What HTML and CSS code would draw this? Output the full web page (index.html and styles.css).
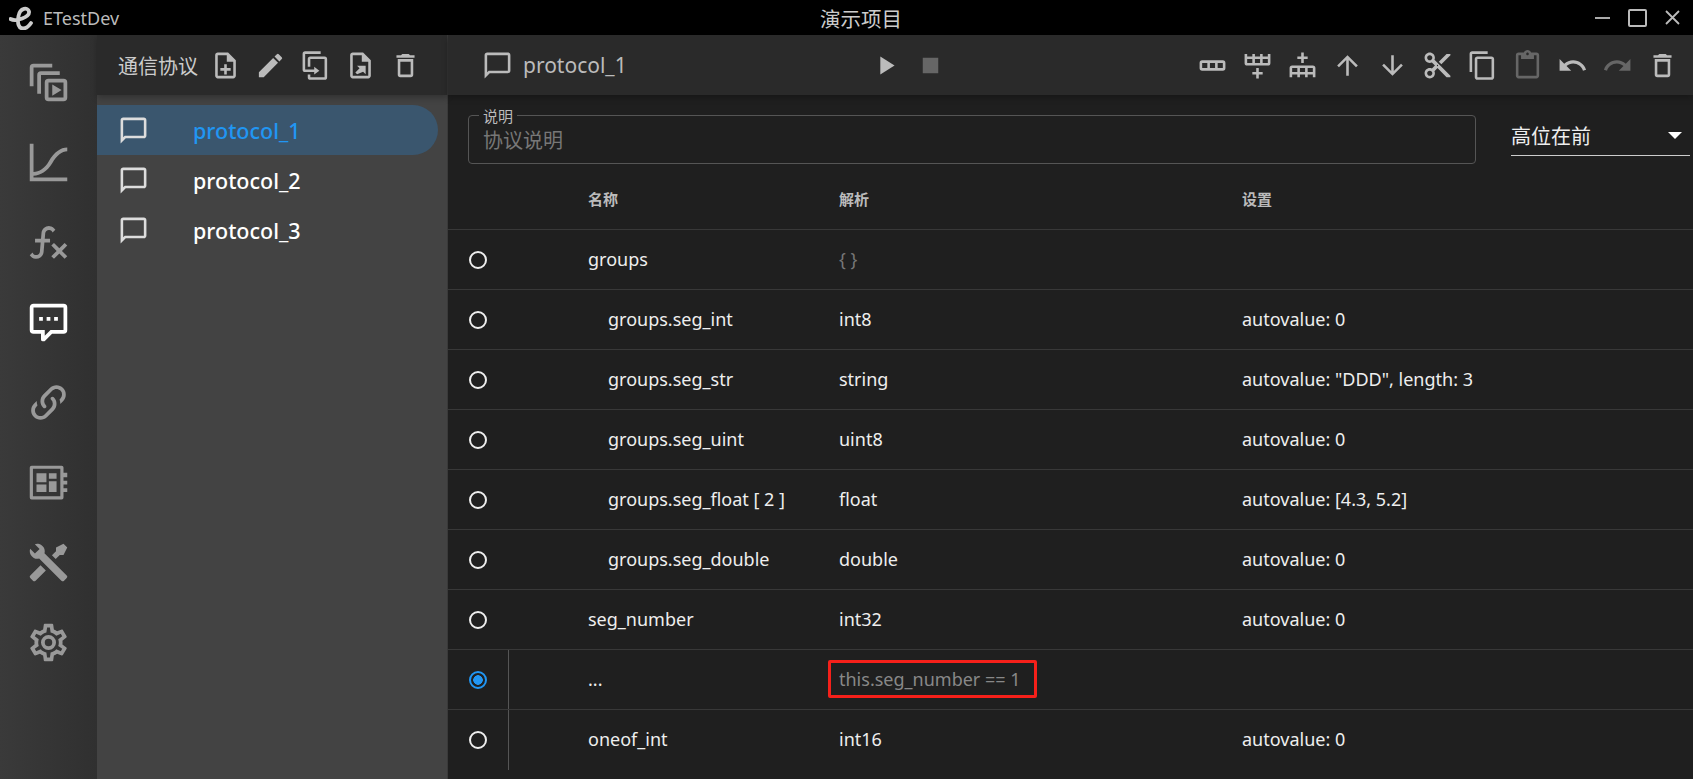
FILE: index.html
```html
<!DOCTYPE html>
<html lang="en">
<head>
    <meta charset="UTF-8">
    <meta name="viewport" content="width=device-width, initial-scale=1.0">
    <title>ETestDev</title>
    <link rel="stylesheet" href="styles.css">
</head>
<body>
    <!-- Title bar -->
    <header class="titlebar">
        <div class="app-name">
            <svg class="app-logo" viewBox="0 0 24 24"><path d="M1.500 13C7 16 21 11 20 5.500 19 1 11 1.500 9.500 10 8 18 10 22.500 14 22.500 17 22.500 20 20 22 17" fill="none" stroke="#ccc" stroke-width="3.800" stroke-linecap="round"/></svg>
            <span>ETestDev</span>
        </div>
        <div class="project-name">演示项目</div>
        <div class="window-buttons">
            <svg width="15" height="18" viewBox="0 0 15 18"><path d="M0 9h15" stroke="#aaa" stroke-width="2"/></svg>
            <svg width="19" height="18" viewBox="0 0 19 18"><rect x="1" y="1" width="17" height="16" rx="1" fill="none" stroke="#bbb" stroke-width="2"/></svg>
            <svg width="15" height="15" viewBox="0 0 15 15"><path d="M1 1l13 13M14 1L1 14" stroke="#bbb" stroke-width="1.800"/></svg>
        </div>
    </header>

    <div class="app">
        <!-- Left navigation -->
        <nav class="sidebar">
            <div class="nav-item"><svg viewBox="0 0 24 24"><path d="M4,2A2,2 0 0,0 2,4V14H4V4H14V2H4M8,6A2,2 0 0,0 6,8V18H8V8H18V6H8M12,10A2,2 0 0,0 10,12V20A2,2 0 0,0 12,22H20A2,2 0 0,0 22,20V12A2,2 0 0,0 20,10H12M12,12H20V20H12V12M14,13V19L19,16L14,13Z"/></svg></div>
            <div class="nav-item"><svg viewBox="0 0 24 24"><path d="M4,19V20H22V22H2V2H4V17C7,17 10,15 12.100,11.400C15.100,6.400 18.400,4 22,4V6C19.200,6 16.500,8.100 13.900,12.500C11.300,16.600 7.700,19 4,19Z"/></svg></div>
            <div class="nav-item"><svg viewBox="0 0 24 24"><path d="M12.420,5.290C11.320,5.190 10.350,6 10.250,7.110L10,10H12.820V12H9.820L9.380,17.070C9.180,19.270 7.240,20.900 5.040,20.700C3.790,20.590 2.660,19.900 2,18.830L3.500,17.330C3.830,18.380 4.960,18.970 6,18.630C6.780,18.390 7.330,17.700 7.400,16.890L7.820,12H4.820V10H8L8.270,6.930C8.460,4.730 10.390,3.100 12.600,3.280C13.860,3.390 15,4.090 15.660,5.170L14.160,6.670C13.910,5.900 13.230,5.360 12.420,5.290M22,13.650L20.590,12.240L17.760,15.070L14.930,12.240L13.500,13.650L16.350,16.500L13.500,19.310L14.930,20.720L17.760,17.890L20.590,20.720L22,19.310L19.170,16.500L22,13.650Z"/></svg></div>
            <div class="nav-item active"><svg viewBox="0 0 24 24"><path d="M9,22A1,1 0 0,1 8,21V18H4A2,2 0 0,1 2,16V4C2,2.890 2.900,2 4,2H20A2,2 0 0,1 22,4V16A2,2 0 0,1 20,18H13.900L10.200,21.710C10,21.900 9.750,22 9.500,22V22H9M10,16V19.080L13.080,16H20V4H4V16H10M17,11H15V9H17V11M13,11H11V9H13V11M9,11H7V9H9V11Z"/></svg></div>
            <div class="nav-item"><svg viewBox="0 0 24 24"><path d="M10.590,13.410C11,13.800 11,14.440 10.590,14.830C10.200,15.220 9.560,15.220 9.170,14.830C7.220,12.880 7.220,9.710 9.170,7.760V7.760L12.710,4.220C14.660,2.270 17.830,2.270 19.780,4.220C21.730,6.170 21.730,9.340 19.780,11.290L18.290,12.780C18.300,11.960 18.170,11.140 17.890,10.360L18.360,9.880C19.540,8.710 19.540,6.810 18.360,5.640C17.190,4.460 15.290,4.460 14.120,5.640L10.590,9.170C9.410,10.340 9.410,12.240 10.590,13.410M13.410,9.170C13.800,8.780 14.440,8.780 14.830,9.170C16.780,11.120 16.780,14.290 14.830,16.240V16.240L11.290,19.780C9.340,21.730 6.170,21.730 4.220,19.780C2.270,17.830 2.270,14.660 4.220,12.710L5.710,11.220C5.700,12.040 5.830,12.860 6.110,13.650L5.640,14.120C4.460,15.290 4.460,17.190 5.640,18.360C6.810,19.540 8.710,19.540 9.880,18.360L13.410,14.830C14.590,13.660 14.590,11.760 13.410,10.590C13,10.200 13,9.560 13.410,9.170Z"/></svg></div>
            <div class="nav-item"><svg viewBox="0 0 24 24"><path fill-rule="evenodd" d="M3 3h16a1 1 0 0 1 1 1v16a1 1 0 0 1-1 1H3a1 1 0 0 1-1-1V4a1 1 0 0 1 1-1zm.700 1.700v14.600h14.600V4.700zM5.600 7h5.300v4.800H5.600zM5.600 13h5.300v4H5.600zM12.200 7h4.100v3h-4.100zM12.200 11.300h4.100V17h-4.100zM20 6.800h2v2.400h-2zM20 11h2v2h-2zM20 15h2v2h-2z"/></svg></div>
            <div class="nav-item"><svg viewBox="0 0 24 24"><path d="M21.710 20.290L20.290 21.710A1 1 0 0 1 18.880 21.710L7 9.850A3.810 3.810 0 0 1 6 10A4 4 0 0 1 2.220 4.700L4.760 7.240L5.290 6.710L6.710 5.290L7.240 4.760L4.700 2.220A4 4 0 0 1 10 6A3.810 3.810 0 0 1 9.850 7L21.710 18.880A1 1 0 0 1 21.710 20.290M2.290 18.880A1 1 0 0 0 2.290 20.290L3.710 21.710A1 1 0 0 0 5.120 21.710L10.590 16.250L7.760 13.420M20 2L16 4V6L13.830 8.170L15.830 10.170L18 8H20L22 4Z"/></svg></div>
            <div class="nav-item"><svg viewBox="0 0 24 24"><path d="M12,8A4,4 0 0,1 16,12A4,4 0 0,1 12,16A4,4 0 0,1 8,12A4,4 0 0,1 12,8M12,10A2,2 0 0,0 10,12A2,2 0 0,0 12,14A2,2 0 0,0 14,12A2,2 0 0,0 12,10M10,22C9.750,22 9.540,21.820 9.500,21.580L9.130,18.930C8.500,18.680 7.960,18.340 7.440,17.940L4.950,18.950C4.730,19.030 4.460,18.950 4.340,18.730L2.340,15.270C2.210,15.050 2.270,14.780 2.460,14.630L4.570,12.970L4.500,12L4.570,11L2.460,9.370C2.270,9.220 2.210,8.950 2.340,8.730L4.340,5.270C4.460,5.050 4.730,4.960 4.950,5.050L7.440,6.050C7.960,5.660 8.500,5.320 9.130,5.070L9.500,2.420C9.540,2.180 9.750,2 10,2H14C14.250,2 14.460,2.180 14.500,2.420L14.870,5.070C15.500,5.320 16.040,5.660 16.560,6.050L19.050,5.050C19.270,4.960 19.540,5.050 19.660,5.270L21.660,8.730C21.790,8.950 21.730,9.220 21.540,9.370L19.430,11L19.500,12L19.430,13L21.540,14.630C21.730,14.780 21.790,15.050 21.660,15.270L19.660,18.730C19.540,18.950 19.270,19.040 19.050,18.950L16.560,17.950C16.040,18.340 15.500,18.680 14.870,18.930L14.500,21.580C14.460,21.820 14.250,22 14,22H10M11.250,4L10.880,6.610C9.680,6.860 8.620,7.500 7.850,8.390L5.440,7.350L4.690,8.650L6.800,10.200C6.400,11.370 6.400,12.640 6.800,13.800L4.680,15.360L5.430,16.660L7.860,15.620C8.630,16.500 9.680,17.140 10.870,17.380L11.240,20H12.760L13.130,17.390C14.320,17.140 15.370,16.500 16.140,15.620L18.570,16.660L19.320,15.360L17.200,13.810C17.600,12.640 17.600,11.370 17.200,10.200L19.310,8.650L18.560,7.350L16.150,8.390C15.380,7.500 14.320,6.860 13.120,6.620L12.750,4H11.250Z"/></svg></div>
        </nav>

        <!-- Protocol list -->
        <aside class="panel">
            <div class="toolbar panel-toolbar">
                <span class="panel-title">通信协议</span>
                <button class="tool"><svg viewBox="0 0 24 24"><path d="M13 11h-2v3H8v2h3v3h2v-3h3v-2h-3zm1-9H6c-1.100 0-2 .900-2 2v16c0 1.100.890 2 1.990 2H18c1.100 0 2-.900 2-2V8l-6-6zm4 18H6V4h7v5h5v11z"/></svg></button>
                <button class="tool"><svg viewBox="0 0 24 24"><path d="M3 17.250V21h3.750L17.810 9.940l-3.750-3.750L3 17.250zM20.710 7.040a.996.996 0 0 0 0-1.410l-2.340-2.340a.996.996 0 0 0-1.410 0l-1.830 1.830 3.750 3.750 1.830-1.830z"/></svg></button>
                <button class="tool"><svg viewBox="0 0 24 24"><path d="M11,17H4A2,2 0 0,1 2,15V3A2,2 0 0,1 4,1H16V3H4V15H11V13L15,16L11,19V17M19,21V7H8V13H6V7A2,2 0 0,1 8,5H19A2,2 0 0,1 21,7V21A2,2 0 0,1 19,23H8A2,2 0 0,1 6,21V19H8V21H19Z"/></svg></button>
                <button class="tool"><svg viewBox="0 0 24 24"><path d="M14 2H6c-1.100 0-2 .900-2 2v16c0 1.100.890 2 1.990 2H18c1.100 0 2-.900 2-2V8l-6-6zm4 18H6V4h7v5h5v11zM9.400 18.800 8 17.400l3.300-3.300-2-2H16v6.700l-2-2z"/></svg></button>
                <button class="tool"><svg viewBox="0 0 24 24"><path d="M6,19A2,2 0 0,0 8,21H16A2,2 0 0,0 18,19V7H6V19M8,9H16V19H8V9M15.500,4L14.500,3H9.500L8.500,4H5V6H19V4H15.500Z"/></svg></button>
            </div>
            <ul class="protocol-list">
                <li class="protocol selected"><svg viewBox="0 0 24 24"><path d="M20 2H4c-1.100 0-2 .900-2 2v18l4-4h14c1.100 0 2-.900 2-2V4c0-1.100-.900-2-2-2zm0 14H5.170L4 17.170V4h16v12z"/></svg><span>protocol_1</span></li>
                <li class="protocol"><svg viewBox="0 0 24 24"><path d="M20 2H4c-1.100 0-2 .900-2 2v18l4-4h14c1.100 0 2-.900 2-2V4c0-1.100-.900-2-2-2zm0 14H5.170L4 17.170V4h16v12z"/></svg><span>protocol_2</span></li>
                <li class="protocol"><svg viewBox="0 0 24 24"><path d="M20 2H4c-1.100 0-2 .900-2 2v18l4-4h14c1.100 0 2-.900 2-2V4c0-1.100-.900-2-2-2zm0 14H5.170L4 17.170V4h16v12z"/></svg><span>protocol_3</span></li>
            </ul>
        </aside>

        <!-- Editor -->
        <main class="editor">
            <div class="toolbar editor-toolbar">
                <div class="doc-title">
                    <svg viewBox="0 0 24 24"><path d="M20 2H4c-1.100 0-2 .900-2 2v18l4-4h14c1.100 0 2-.900 2-2V4c0-1.100-.900-2-2-2zm0 14H5.170L4 17.170V4h16v12z"/></svg>
                    <span>protocol_1</span>
                </div>
                <button class="tool"><svg viewBox="0 0 24 24"><path d="M8 5v14l11-7z"/></svg></button>
                <button class="tool off"><svg viewBox="0 0 24 24"><path d="M6 6h12v12H6z"/></svg></button>
                <div class="tool-group">
                    <button class="tool"><svg viewBox="0 0 24 24"><path fill-rule="evenodd" d="M4 8a2 2 0 0 0-2 2v4a2 2 0 0 0 2 2h16a2 2 0 0 0 2-2v-4a2 2 0 0 0-2-2H4zm0 2h4v4H4zm6 0h4v4h-4zm6 0h4v4h-4z"/></svg></button>
                    <button class="tool"><svg viewBox="0 0 24 24"><path d="M22,10A2,2 0 0,1 20,12H4A2,2 0 0,1 2,10V3H4V5H8V3H10V5H14V3H16V5H20V3H22V10M4,10H8V7H4V10M10,10H14V7H10V10M20,10V7H16V10H20M11,14H13V17H16V19H13V22H11V19H8V17H11V14Z"/></svg></button>
                    <button class="tool"><svg viewBox="0 0 24 24"><path d="M22,14A2,2 0 0,0 20,12H4A2,2 0 0,0 2,14V21H4V19H8V21H10V19H14V21H16V19H20V21H22V14M4,14H8V17H4V14M10,14H14V17H10V14M20,14V17H16V14H20M11,10H13V7H16V5H13V2H11V5H8V7H11V10Z"/></svg></button>
                    <button class="tool"><svg viewBox="0 0 24 24"><path d="M4 12l1.410 1.410L11 7.830V20h2V7.830l5.580 5.590L20 12l-8-8-8 8z"/></svg></button>
                    <button class="tool"><svg viewBox="0 0 24 24"><path d="M20 12l-1.410-1.410L13 16.170V4h-2v12.170l-5.580-5.590L4 12l8 8 8-8z"/></svg></button>
                    <button class="tool"><svg viewBox="0 0 24 24"><path d="M9.640 7.640c.230-.500.360-1.050.360-1.640 0-2.210-1.790-4-4-4S2 3.790 2 6s1.790 4 4 4c.590 0 1.140-.130 1.640-.360L10 12l-2.360 2.360C7.140 14.130 6.590 14 6 14c-2.210 0-4 1.790-4 4s1.790 4 4 4 4-1.790 4-4c0-.590-.130-1.140-.360-1.640L12 14l7 7h3v-1L9.640 7.640zM6 8c-1.100 0-2-.890-2-2s.900-2 2-2 2 .890 2 2-.900 2-2 2zm0 12c-1.100 0-2-.890-2-2s.900-2 2-2 2 .890 2 2-.900 2-2 2zm6-7.500c-.280 0-.500-.220-.500-.500s.220-.500.500-.500.500.220.500.500-.220.500-.500.500zM19 3l-6 6 2 2 7-7V3z"/></svg></button>
                    <button class="tool"><svg viewBox="0 0 24 24"><path d="M16 1H4c-1.100 0-2 .900-2 2v14h2V3h12V1zm3 4H8c-1.100 0-2 .900-2 2v14c0 1.100.900 2 2 2h11c1.100 0 2-.900 2-2V7c0-1.100-.900-2-2-2zm0 16H8V7h11v14z"/></svg></button>
                    <button class="tool off"><svg viewBox="0 0 24 24"><path d="M19 2h-4.180C14.400.840 13.300 0 12 0c-1.300 0-2.400.840-2.820 2H5c-1.100 0-2 .900-2 2v16c0 1.100.900 2 2 2h14c1.100 0 2-.900 2-2V4c0-1.100-.900-2-2-2zm-7 0c.550 0 1 .450 1 1s-.450 1-1 1-1-.450-1-1 .450-1 1-1zm7 18H5V4h2v3h10V4h2v16z"/></svg></button>
                    <button class="tool"><svg viewBox="0 0 24 24"><path d="M12.500 8c-2.650 0-5.050.990-6.900 2.600L2 7v9h9l-3.620-3.620c1.390-1.160 3.160-1.880 5.120-1.880 3.540 0 6.550 2.310 7.600 5.500l2.370-.780C21.080 11.030 17.150 8 12.500 8z"/></svg></button>
                    <button class="tool off"><svg viewBox="0 0 24 24"><path d="M18.400 10.600C16.550 8.990 14.150 8 11.500 8c-4.650 0-8.580 3.030-9.960 7.220L3.900 16c1.050-3.190 4.050-5.500 7.600-5.500 1.950 0 3.730.720 5.120 1.880L13 16h9V7l-3.600 3.600z"/></svg></button>
                    <button class="tool"><svg viewBox="0 0 24 24"><path d="M6,19A2,2 0 0,0 8,21H16A2,2 0 0,0 18,19V7H6V19M8,9H16V19H8V9M15.500,4L14.500,3H9.500L8.500,4H5V6H19V4H15.500Z"/></svg></button>
                </div>
            </div>

            <div class="form-row">
                <div class="field">
                    <span class="field-label">说明</span>
                    <span class="field-placeholder">协议说明</span>
                </div>
                <div class="byte-order">
                    <span>高位在前</span>
                    <i class="caret"></i>
                </div>
            </div>

            <div class="table">
                <div class="row head"><div class="mark"></div><div></div><div>名称</div><div>解析</div><div>设置</div></div>
                <div class="row"><div class="mark"><i class="radio"></i></div><div></div><div>groups</div><div class="muted">{ }</div><div></div></div>
                <div class="row"><div class="mark"><i class="radio"></i></div><div></div><div class="child">groups.seg_int</div><div>int8</div><div>autovalue: 0</div></div>
                <div class="row"><div class="mark"><i class="radio"></i></div><div></div><div class="child">groups.seg_str</div><div>string</div><div>autovalue: "DDD", length: 3</div></div>
                <div class="row"><div class="mark"><i class="radio"></i></div><div></div><div class="child">groups.seg_uint</div><div>uint8</div><div>autovalue: 0</div></div>
                <div class="row"><div class="mark"><i class="radio"></i></div><div></div><div class="child">groups.seg_float [ 2 ]</div><div>float</div><div>autovalue: [4.3, 5.2]</div></div>
                <div class="row"><div class="mark"><i class="radio"></i></div><div></div><div class="child">groups.seg_double</div><div>double</div><div>autovalue: 0</div></div>
                <div class="row"><div class="mark"><i class="radio"></i></div><div></div><div>seg_number</div><div>int32</div><div>autovalue: 0</div></div>
                <div class="row"><div class="mark nested"><i class="radio on"></i></div><div></div><div>...</div><div><span class="condition">this.seg_number == 1</span></div><div></div></div>
                <div class="row last"><div class="mark nested"><i class="radio"></i></div><div></div><div>oneof_int</div><div>int16</div><div>autovalue: 0</div></div>
            </div>
        </main>
    </div>
</body>
</html>
```

FILE: styles.css
```css
* {
    margin: 0;
    padding: 0;
    box-sizing: border-box;
}

html, body {
    height: 100%;
    overflow: hidden;
}

body {
    background: #1f1f1f;
    color: #eee;
    font-family: "Noto Sans", "Noto Sans CJK SC", sans-serif;
    font-size: 18px;
}

svg {
    display: block;
    fill: currentColor;
}

/* Title bar */
.titlebar {
    height: 35px;
    background: #000;
    display: flex;
    align-items: center;
    color: #bbb;
}

.app-name {
    width: 820px;
    display: flex;
    align-items: center;
    gap: 10px;
    padding-left: 9px;
    font-size: 18px;
}

.app-logo {
    width: 24px;
    height: 24px;
}

.project-name {
    font-size: 20.500px;
    color: #ccc;
}

.window-buttons {
    margin-left: auto;
    display: flex;
    align-items: center;
    gap: 18px;
    padding-right: 13px;
}

/* Layout */
.app {
    display: flex;
    height: calc(100% - 35px);
}

.sidebar {
    width: 97px;
    padding-top: 7px;
    background: linear-gradient(90deg, #3a3a3a, #303030);
    flex-shrink: 0;
}

.nav-item {
    height: 80px;
    display: flex;
    align-items: center;
    justify-content: center;
    color: #999;
}

.nav-item svg {
    width: 45px;
    height: 45px;
}

.nav-item.active {
    color: #fff;
}

.panel {
    width: 351px;
    flex-shrink: 0;
    background: #434343;
    border-right: 1px solid #3a3a3a;
}

.toolbar {
    height: 60px;
    display: flex;
    align-items: center;
    background: #2a2a2a;
    box-shadow: 0 3px 6px rgba(0, 0, 0, 0.25);
    color: #bbb;
}

.tool {
    width: 45px;
    height: 45px;
    flex-shrink: 0;
    background: none;
    border: none;
    color: inherit;
    display: flex;
    align-items: center;
    justify-content: center;
}

.tool svg {
    width: 31px;
    height: 31px;
}

.tool.off {
    color: #666;
}

.panel-toolbar {
    padding-left: 21px;
}

.panel-title {
    width: 84.500px;
    font-size: 20px;
    color: #ccc;
}

/* Protocol list */
.protocol-list {
    list-style: none;
    margin-top: 10px;
}

.protocol {
    width: 341px;
    height: 50px;
    display: flex;
    align-items: center;
    gap: 44px;
    padding-left: 21px;
    font-size: 21.500px;
    font-weight: 500;
    color: #fff;
}

.protocol svg {
    width: 31px;
    height: 31px;
    color: #ddd;
}

.protocol.selected {
    background: #3a566e;
    border-radius: 0 25px 25px 0;
    color: #2196f3;
}

/* Editor */
.editor {
    flex: 1;
    min-width: 0;
}

.doc-title {
    width: 415px;
    padding-left: 34px;
    display: flex;
    align-items: center;
    gap: 10px;
    font-size: 21px;
}

.doc-title svg {
    width: 31px;
    height: 31px;
}

.tool-group {
    margin-left: auto;
    padding-right: 8px;
    display: flex;
}

.form-row {
    display: flex;
    align-items: flex-start;
    gap: 35px;
    padding: 20px 3px 0 20px;
}

.field {
    position: relative;
    width: 1008px;
    height: 49px;
    border: 1px solid #555;
    border-radius: 4px;
    padding: 7px 14px;
}

.field-label {
    position: absolute;
    top: -9px;
    left: 10px;
    padding: 0 4px;
    background: #1f1f1f;
    font-size: 15px;
    line-height: 18px;
    color: #bbb;
}

.field-placeholder {
    font-size: 20px;
    line-height: 36px;
    color: #777;
}

.byte-order {
    flex: 1;
    height: 41px;
    border-bottom: 1px solid #ccc;
    display: flex;
    align-items: center;
    justify-content: space-between;
    padding-right: 8px;
    font-size: 20px;
}

.caret {
    border-left: 7px solid transparent;
    border-right: 7px solid transparent;
    border-top: 7px solid #fff;
}

/* Table */
.table {
    margin-top: 6px;
}

.row {
    height: 60px;
    display: grid;
    grid-template-columns: 61px 79px 251px 403px 1fr;
    align-items: center;
    border-bottom: 1px solid #383838;
}

.row > div:not(.mark) {
    padding-bottom: 2px;
}

.row.last {
    border-bottom: none;
}

.row.head {
    font-size: 15px;
    font-weight: 700;
    color: #bbb;
}

.mark {
    height: 100%;
    display: flex;
    align-items: center;
    padding-left: 21px;
}

.mark.nested {
    border-right: 1px solid #555;
}

.radio {
    width: 18px;
    height: 18px;
    border: 2px solid #eee;
    border-radius: 50%;
}

.radio.on {
    border-color: #2196f3;
    background: radial-gradient(circle, #2196f3 0 4.500px, transparent 5px);
}

.row > .child {
    padding-left: 20px;
}

.muted {
    color: #777;
}

.condition {
    display: inline-block;
    margin-left: -11px;
    padding: 3px 13px 3px 8px;
    border: 3px solid #f5201a;
    border-radius: 2px;
    color: #888;
    line-height: 26px;
}
```
